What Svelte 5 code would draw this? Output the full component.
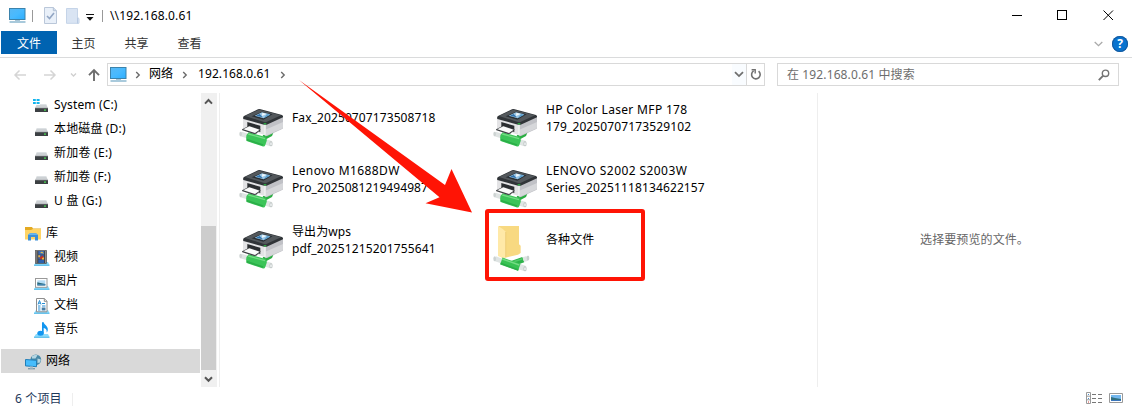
<script>
  const drives = [
    { name: 'System (C:)', icon: 'sys', ls: 0.15 },
    { name: '本地磁盘 (D:)', icon: 'drive', ls: 0.15 },
    { name: '新加卷 (E:)', icon: 'drive', ls: 0.25 },
    { name: '新加卷 (F:)', icon: 'drive', ls: 0.15 },
    { name: 'U 盘 (G:)', icon: 'drive', ls: 0.25 }
  ];
  const libs = [
    { name: '视频', icon: 'video' },
    { name: '图片', icon: 'picture' },
    { name: '文档', icon: 'doc' },
    { name: '音乐', icon: 'music' }
  ];
  const files = [
    { lines: [['Fax_20250707173508718', 0.1]] },
    { lines: [['HP Color Laser MFP 178', 0.33], ['179_20250707173529102', 0.12]] },
    { lines: [['Lenovo M1688DW', 0.4], ['Pro_2025081219494987', 0.08]] },
    { lines: [['LENOVO S2002 S2003W', 0.42], ['Series_20251118134622157', 0.12]] },
    { lines: [['导出为wps', 0.1], ['pdf_20251215201755641', 0.14]] },
    { lines: [['各种文件', 0.1]], folder: true }
  ];
</script>

<svelte:head><title>192.168.0.61</title></svelte:head>

{#snippet monitor()}
  <svg class="mon" width="17" height="16" viewBox="0 0 17 16">
    <defs><linearGradient id="scr" x1="0" y1="0" x2="1" y2="1"><stop offset="0" stop-color="#58b8f4" /><stop offset=".5" stop-color="#48baff" /><stop offset="1" stop-color="#2caeff" /></linearGradient></defs>
    <rect x=".5" y=".5" width="15.5" height="11" fill="url(#scr)" stroke="#3b83ac" />
    <path d="M6 12h5v1H6z" fill="#a8c4d4" />
    <path d="M.5 14h16" stroke="#6fa6c4" stroke-width="1.2" />
  </svg>
{/snippet}

{#snippet crumb()}
  <svg class="crumb" width="6" height="8" viewBox="0 0 6 8"><path d="M1.2 1l3 3-3 3" fill="none" stroke="#6a6a6a" stroke-width="1.4" /></svg>
{/snippet}

{#snippet navIcon(kind)}
  <svg width="17" height="16" viewBox="0 0 17 16">
    {#if kind === 'sys' || kind === 'drive'}
      <path d="M4 6h9l2 4H2z" fill="#cdd1d4" />
      <path d="M4 6h9l.5 1h-10z" fill="#dde1e4" />
      <rect x="2" y="10" width="13" height="4" fill="#3c4043" />
      <path d="M2 10.3h13" stroke="#6c7073" stroke-width=".7" />
      <rect x="11" y="11.5" width="2" height="1.2" fill="#48e252" />
      {#if kind === 'sys'}
        <path d="M0 0h7v7H0z" fill="#fff" />
        <path d="M0 1h2.8v2H0zM3.6 1h3v2h-3zM0 4h2.8v2H0zM3.6 4h3v2h-3z" fill="#12b5ee" />
      {/if}
    {:else if kind === 'video'}
      <path d="M3 12h12l1.5 3H1z" fill="#8bdafb" /><path d="M1 15.3h15.5" stroke="#43b4e8" />
      <rect x="2.5" y=".5" width="11" height="13" fill="#414141" stroke="#555" stroke-width=".6" />
      <path d="M3.8 1.5v12M12.5 1.5v12" stroke="#ddd" stroke-width="1" stroke-dasharray="1 1" />
      <path d="M5.3 1h5.8v3.7H5.3z" fill="#3b69b4" /><path d="M5.3 5.2h5.8v4.3H5.3z" fill="#3463ab" /><path d="M5.3 10h5.8v3H5.3z" fill="#2d60ab" />
      <path d="M6.3 7.6l3.2-2L11 7.8l-3 1.6z" fill="#c53320" /><path d="M5.3 5.2h2l-.6 2H5.3zM9 8l2-.8v2.3H9z" fill="#efb33c" /><path d="M7 3l2-1.5L11 3.5z" fill="#e7c24b" />
    {:else if kind === 'picture'}
      <path d="M3 12h12l1.5 3H1z" fill="#8bdafb" /><path d="M1 15.3h15.5" stroke="#43b4e8" />
      <rect x="2.5" y="4.5" width="11.5" height="8.8" fill="#fff" stroke="#999" />
      <rect x="4.3" y="6.3" width="8" height="5" fill="#b5dcf5" />
      <path d="M4.3 8.3l3 .8 5 1v1.3h-8z" fill="#2a6978" /><path d="M4.3 10.3h8v1h-8z" fill="#4c8fc7" />
    {:else if kind === 'doc'}
      <path d="M3 12h12l1.5 3H1z" fill="#8bdafb" /><path d="M1 15.3h15.5" stroke="#43b4e8" />
      <path d="M3.5.5h8l2.5 2.5v10.8H3.5z" fill="#fff" stroke="#8e8e8e" /><path d="M11.3.5v2.8h2.7" fill="#eee" stroke="#8e8e8e" />
      <path d="M5 6.5l1.5-4 1.5 4M5.5 5.2h2M9 5.5h3M5 8h2.5M9 8h3.5M5 10h2.5M5 12h2.5" fill="none" stroke="#268dd3" stroke-width="1" />
      <path d="M8.7 9.5h3.8v3H8.7z" fill="#487da5" />
    {:else if kind === 'music'}
      <path d="M3 12h12l1.5 3H1z" fill="#8bdafb" /><path d="M1 15.3h15.5" stroke="#43b4e8" />
      <ellipse cx="7.5" cy="11.3" rx="3.2" ry="2.5" fill="#1296f0" />
      <path d="M9 .3h1.8c.1 2.7 4.6 3.6 4 7.7-.1 1-.6 2-1.2 2.5.6-2.8-.8-4-2.9-4.5v5.6H9z" fill="#1296f0" />
    {/if}
  </svg>
{/snippet}

{#snippet printer()}
  <svg class="big" width="50" height="50" viewBox="0 0 150 150">
    <path d="M80 100l34-12-6 14-22 12z" fill="#2aae42" />
    <path d="M15 96l20 6" stroke="#dfe4e3" stroke-width="14" /><ellipse cx="14" cy="96" rx="4" ry="7" fill="#cdd3d2" />
    <path d="M86 119l19 6" stroke="#e0e5e4" stroke-width="17" />
    <path d="M38 91l48 13q8 2 6 13l-4 12q-2 6-9 4l-47-16q-5-17 6-26z" fill="#3bc458" />
    <path d="M37 96l50 14" stroke="#74dc84" stroke-width="4" /><path d="M32 113l49 16" stroke="#2bae48" stroke-width="5" />
    <ellipse cx="105" cy="125" rx="5" ry="8" fill="#c3c9c8" /><ellipse cx="105" cy="125" rx="2.5" ry="4.5" fill="#eef1f1" />
    <path d="M21 50l67 19v31L21 78z" fill="#e3e3e5" />
    <path d="M88 66l53-22v33q0 3-4 5l-44 20-5 1z" fill="#c0c1c6" />
    <path d="M88 83l53-23v15q0 3-4 5l-44 20-5 1z" fill="#d6d7da" />
    <path d="M87 66v34" stroke="#f2f3f4" stroke-width="4" />
    <path d="M34 60l39 11v19l-39-12z" fill="#2b2e31" />
    <path d="M18 82l22-11 34 11-13 13-7 1-35-11z" fill="#3c3f42" /><path d="M22 82l18-9 31 10-14 10z" fill="#fbfbfb" />
    <path d="M24 42l42-20q4-2 8 0l64 17q4 2 3 7L92 68q-4 1-8 0L22 51q-2-7 2-9z" fill="#303438" />
    <path d="M27 42l40-18q3-1 6 0l62 16-44 20q-3 1-7 0z" fill="#53585c" />
    <path d="M47 43l31-14 32 8-28 16z" fill="#292f34" />
    <path d="M56 41l22-10 25 6-20 12z" fill="#9cc8e6" /><path d="M60 41l11-5 9 10z" fill="#2e6faa" /><path d="M79 32l12 4-13 6z" fill="#f3f9fd" /><path d="M83 49l20-11-10-2z" fill="#5b9fce" />
    <rect x="83" y="64" width="8" height="3" fill="#2fdc48" />
  </svg>
{/snippet}

{#snippet folder()}
  <svg class="big" width="50" height="50" viewBox="0 0 150 150">
    <path d="M26 6h61v55l5 4v22l-8 5-38 9z" fill="#f8d981" />
    <path d="M24 6q17 9 24 18v74l-5 7-19-9z" fill="#ffe9a8" /><path d="M47 24v76" stroke="#e7c267" stroke-width="2" />
    <path d="M66 119l34-12" stroke="#2eb24a" stroke-width="17" />
    <path d="M66 115l32-11" stroke="#51cb68" stroke-width="5" />
    <path d="M15 104l20 7" stroke="#dfe4e3" stroke-width="15" /><ellipse cx="14" cy="104" rx="4" ry="7.5" fill="#cbd2d1" />
    <path d="M100 107l12-4" stroke="#dfe4e3" stroke-width="15" /><ellipse cx="114" cy="102" rx="4" ry="7.5" fill="#c9d0cf" />
    <path d="M86 127l18 6" stroke="#e0e5e4" stroke-width="17" />
    <path d="M34 111l54 19" stroke="#38c253" stroke-width="22" /><path d="M37 105l51 18" stroke="#74dc84" stroke-width="4" /><path d="M32 118l53 20" stroke="#2bae48" stroke-width="5" />
    <ellipse cx="105" cy="134" rx="5" ry="8" fill="#c3c9c8" /><ellipse cx="105" cy="134" rx="2.5" ry="4.5" fill="#eef1f1" />
  </svg>
{/snippet}

<div class="window">
  <header class="titlebar">
    {@render monitor()}
    <i class="vbar a"></i>
    <svg class="check" width="13" height="17" viewBox="0 0 13 17"><path d="M.5.5h8.8l3.2 3.2v12.8H.5z" fill="#e9f0f9" stroke="#bac7d9" /><path d="M9.3.5v3.2h3.2" fill="#d0dceb" stroke="#b3c1d5" /><path d="M3 9l2.5 2.5L10 6" fill="none" stroke="#91a5c3" stroke-width="1.6" /></svg>
    <svg class="newf" width="14" height="16" viewBox="0 0 14 16"><path d="M.5.5h11v9l1.5 1v4.8H.5z" fill="#d9e4f3" stroke="#c5d4e8" /><path d="M11.5 9.5v6" stroke="#b8cae3" /></svg>
    <svg class="menu" width="8" height="7" viewBox="0 0 8 7"><path d="M0 0h8v1H0zM.5 3h7L4 6.8z" fill="#111" /></svg>
    <i class="vbar b"></i>
    <span class="path">\\192.168.0.61</span>
    <svg class="controls" width="104" height="12" viewBox="0 0 104 12" fill="none" stroke="#000"><path d="M1 5.500h10M46.500.500h9v9h-9z" shape-rendering="crispEdges" /><path d="M92.500.500l9.500 9.500M102 .500L92.500 10" /></svg>
  </header>
  <nav class="tabs">
    <span class="active">文件</span><span>主页</span><span>共享</span><span>查看</span>
    <svg class="chev" width="9" height="6" viewBox="0 0 9 6"><path d="M.7 1l3.8 3.6L8.3 1" fill="none" stroke="#a9a9a9" stroke-width="1.3" /></svg>
    <b class="help">?</b>
  </nav>
  <div class="addressrow">
    <svg class="arrows" width="90" height="14" viewBox="0 0 90 14" fill="none">
      <path d="M14 7H3M7.5 2.5L3 7l4.5 4.5M32 7h11M38.5 2.5L43 7l-4.5 4.5" stroke="#d5d5d5" stroke-width="1.5" />
      <path d="M59 5.5l2.5 2.5L64 5.5" stroke="#cfcfcf" stroke-width="1.3" />
      <path d="M82 13V2.4M77 7.2l5-5 5 5" stroke="#6d6d6d" stroke-width="1.9" />
    </svg>
    <div class="address">
      {@render monitor()}{@render crumb()}
      <span class="net">网络</span>{@render crumb()}
      <span class="host">192.168.0.61</span>{@render crumb()}
      <span class="drop"><svg width="10" height="7" viewBox="0 0 10 7"><path d="M1 1.2l4 3.9 4-3.9" fill="none" stroke="#6f6f6f" stroke-width="1.8" /></svg></span>
      <span class="refresh"><svg width="12" height="13" viewBox="0 0 12 13"><path d="M8.6 3.2a4.300 4.300 0 1 1-5-.3" fill="none" stroke="#707070" stroke-width="1.600" /><path d="M1.600 1.700h3.600v3.900" fill="none" stroke="#707070" stroke-width="1.400" /></svg></span>
    </div>
    <div class="search"><span>在 192.168.0.61 中搜索</span><svg width="12" height="12" viewBox="0 0 12 12" fill="none" stroke="#737373"><circle cx="7.5" cy="4.3" r="3.2" stroke-width="1.4" /><path d="M5 6.8L.8 11.2" stroke-width="1.9" /></svg></div>
  </div>
  <main>
    <aside>
      {#each drives as d}
        <div class="node child">{@render navIcon(d.icon)}<span style:letter-spacing="{d.ls}px">{d.name}</span></div>
      {/each}
      <div class="node root gap">
        <svg width="17" height="16" viewBox="0 0 17 16"><path d="M0 1h7l1 1.5h8V13H0z" fill="#e4aa22" /><path d="M0 4h6l2-1h8v10.5H0z" fill="#ffd465" /><path d="M3 14.5V9l2-1.8h6L13 9v5.5h-3V11H6v3.5z" fill="#3c8fd8" /><path d="M3 9l2-1.8h6L13 9z" fill="#67b6ee" /></svg>
        <span>库</span>
      </div>
      {#each libs as l}
        <div class="node child">{@render navIcon(l.icon)}<span>{l.name}</span></div>
      {/each}
      <div class="node root gap selected">
        <svg width="17" height="16" viewBox="0 0 17 16"><circle cx="10.8" cy="5.8" r="5.4" fill="#4788a6" /><path d="M7 2.2q3-2.4 5.5-1L10.5 4.5H7zM12.5 4.5l3.4 1-.8 3-2.6.5z" fill="#b3d5e2" /><path d="M.5 5.5l11 .8v6.4l-11-.8z" fill="#47bdfc" stroke="#227eb7" /><path d="M3 14.7h7" stroke="#7996a5" stroke-width="1.3" /><path d="M5 12.5h3v2H5z" fill="#aec0ca" /></svg>
        <span>网络</span>
      </div>
    </aside>
    <div class="scroll">
      <svg class="up" width="9" height="7" viewBox="0 0 9 7"><path d="M1 5.6l3.5-3.6L8 5.6" fill="none" stroke="#555" stroke-width="2" /></svg>
      <i class="thumb"></i>
      <svg class="down" width="9" height="7" viewBox="0 0 9 7"><path d="M1 1.2l3.5 3.6L8 1.2" fill="none" stroke="#555" stroke-width="2" /></svg>
    </div>
    <section class="files">
      {#each files as f}
        <div class="file">
          {#if f.folder}{@render folder()}{:else}{@render printer()}{/if}
          <div class="label" class:single={f.lines.length === 1}>{#each f.lines as [line, ls]}<p style:letter-spacing="{ls}px">{line}</p>{/each}</div>
        </div>
      {/each}
    </section>
    <section class="preview">选择要预览的文件。</section>
  </main>
  <footer>
    <span>6 个项目</span><i></i>
    <svg width="38" height="14" viewBox="0 0 38 14"><path d="M.5 1.5h4v11h-4zM.5 5.2h4M.5 8.8h4" fill="none" stroke="#9a9a9a" /><path d="M2 3h1v1H2zM2 7h1v1H2z" fill="#4b8dce" /><path d="M2 10.5h1v1H2z" fill="#d43b32" /><path d="M6 3.5h4M12 3.5h4M6 7.5h4M12 7.5h4M6 11.5h4M12 11.5h4" stroke="#777" /><path d="M23.5 2.5h13v9h-13z" fill="#fff" stroke="#999" /><path d="M25 4h10v6H25z" fill="#74b8ef" /><path d="M25 6l4 1 6 1v2H25z" fill="#316f7e" /><path d="M25 9h10v1H25z" fill="#3b76bb" /></svg>
  </footer>
  <svg class="marks" width="1132" height="411" viewBox="0 0 1132 411"><path d="M299 80L445 185l6.5-16L472 212.5l-46.5-9.2 14-6z" fill="#ff1405" /><rect x="487" y="211" width="156" height="68" rx="1" fill="none" stroke="#ff1405" stroke-width="4" /></svg>
</div>

<style>
  :global(body) { margin: 0; background: #fff; }
  * { box-sizing: border-box; }
  svg { display: block; flex: none; }
  .window { position: relative; width: 1132px; height: 411px; overflow: hidden; display: flex; flex-direction: column; background: #fff; color: #000; font: 12px/16px "Noto Sans", "Noto Sans CJK SC", sans-serif; white-space: nowrap; }
  .titlebar { height: 31px; display: flex; align-items: center; padding-left: 9px; flex: none; }
  .vbar { width: 1px; height: 12px; background: #999; flex: none; }
  .vbar.a { margin-left: 6px; }
  .check { margin-left: 11px; }
  .newf { margin-left: 9px; }
  .menu { margin: 3px 0 0 6px; }
  .vbar.b { margin: 0 7px 0 8px; }
  .path { letter-spacing: .15px; }
  .controls { margin-left: auto; margin-right: 17px; }
  .tabs { height: 27px; border-bottom: 1px solid #dadbdc; display: flex; align-items: flex-start; flex: none; padding-left: 1px; color: #333; }
  .tabs span { width: 53px; height: 23px; line-height: 25px; text-align: center; }
  .tabs .active { width: 56px; background: #0063b1; color: #fff; }
  .tabs .chev { margin: 10px 9px 0 auto; }
  .help { width: 16px; height: 16px; border-radius: 50%; background: #0873cf; box-shadow: inset 0 0 0 1px #17599c; color: #fff; text-align: center; line-height: 16px; font-size: 12px; margin: 5px 4px 0 0; }
  .addressrow { height: 35px; display: flex; flex: none; padding: 5px 13px 0 12px; }
  .arrows { margin: 5px 5px 0 0; }
  .address { width: 658px; height: 23px; border: 1px solid #d9d9d9; display: flex; align-items: center; padding-left: 2px; }
  .address > :global(.crumb) { margin-left: 8px; }
  .address > span { margin-top: -1px; }
  .net { margin-left: 8px; }
  .net + :global(.crumb) { margin-left: 9px; }
  .host { margin-left: 10px; letter-spacing: .08px; }
  .host + :global(.crumb) { margin-left: 10px; }
  .address > .drop { margin: 0 0 0 auto; width: 15px; height: 21px; display: grid; place-items: center; background: #f9fcff; border-right: 1px solid #d9d9d9; }
  .address > .refresh { width: 17px; display: grid; place-items: center; margin: 0; padding-left: 1px; }
  .search { width: 342px; height: 23px; border: 1px solid #d9d9d9; margin-left: 12px; padding: 0 8px 0 9px; display: flex; align-items: center; justify-content: space-between; color: #6d6d6d; }
  .search span { letter-spacing: .12px; }
  main { height: 294px; display: flex; flex: none; }
  aside { width: 201px; padding: 0 1px; }
  .node { height: 24px; display: flex; align-items: center; }
  .node svg { margin-top: 1px; }
  .child { padding-left: 32px; }
  .child span { margin-left: 4px; }
  .root { padding-left: 24px; }
  .root span { margin-left: 4px; }
  .gap { margin-top: 8px; }
  .selected { background: #d9d9d9; }
  .scroll { width: 16px; height: 294px; background: #f0f0f0; display: flex; flex-direction: column; align-items: center; padding-right: 1px; }
  .up { margin-top: 5px; }
  .thumb { width: 15px; height: 144px; margin-top: 121px; background: #cdcdcd; align-self: flex-start; }
  .down { margin-top: 6px; }
  .files { width: 599px; height: 294px; margin-left: 2px; border-left: 1px solid #eee; border-right: 1px solid #eee; padding: 9px 0 0 16px; display: grid; grid-template-columns: 254px 254px; grid-template-rows: 61px 61px 61px; align-content: start; }
  .file { display: flex; align-items: flex-start; }
  .label { height: 34px; margin: -1px 0 0 6px; display: flex; flex-direction: column; justify-content: center; }
  .label.single { margin-top: -2px; }
  .label p { margin: 0; height: 17px; line-height: 17px; }
  .preview { flex: 1; display: grid; place-items: center; color: #666; padding-right: 1px; letter-spacing: .1px; }
  footer { height: 24px; display: flex; align-items: center; padding: 0 8px 0 15px; color: #1e395b; }
  footer span { letter-spacing: .15px; }
  footer i { width: 1px; height: 13px; background: #eee; margin-left: 10px; }
  footer svg { margin-left: auto; margin-top: -2px; }
  .marks { position: absolute; left: 0; top: 0; pointer-events: none; }
</style>
